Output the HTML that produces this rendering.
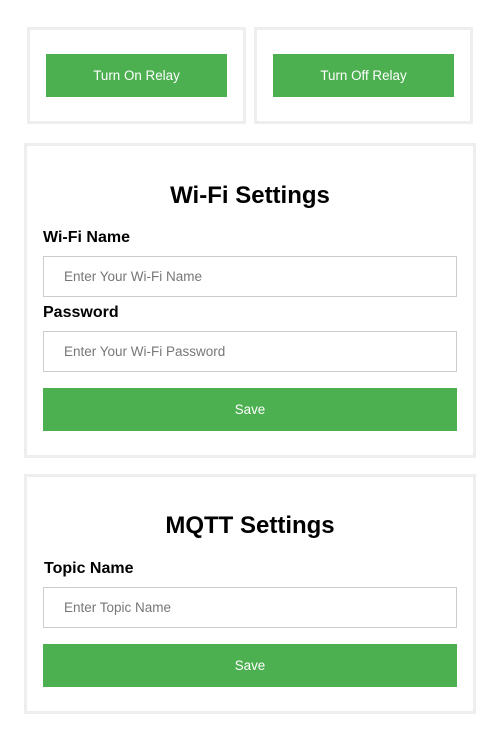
<!DOCTYPE html>
<html><head><style>
body{margin:0;width:500px;height:755px;background:#fff;font-family:"Liberation Sans",Arial,sans-serif;position:relative}
.box{position:absolute;border:3px solid #eee;box-sizing:border-box}
.btn{position:absolute;background:#4caf50;color:#fff;font-size:13.4px;display:flex;align-items:center;justify-content:center}
.h{position:absolute;left:0;right:0;text-align:center;font-weight:bold;font-size:24px;color:#000}
.lbl{position:absolute;font-weight:bold;font-size:16px;color:#000}
.in{position:absolute;left:43px;width:414px;height:41px;border:1px solid #ccc;box-sizing:border-box;color:#777;font-size:13.5px;padding-left:20px;line-height:39px}
</style></head><body>
<div class="box" style="left:27px;top:27px;width:219px;height:97px"></div>
<div class="box" style="left:254px;top:27px;width:219px;height:97px"></div>
<div class="btn" style="left:46px;top:54px;width:181px;height:43px">Turn On Relay</div>
<div class="btn" style="left:273px;top:54px;width:181px;height:43px">Turn Off Relay</div>

<div class="box" style="left:24px;top:143px;width:452px;height:315px"></div>
<div class="h" style="top:182px">Wi-Fi Settings</div>
<div class="lbl" style="left:43px;top:229px">Wi-Fi Name</div>
<div class="in" style="top:256px">Enter Your Wi-Fi Name</div>
<div class="lbl" style="left:43px;top:304px">Password</div>
<div class="in" style="top:331px">Enter Your Wi-Fi Password</div>
<div class="btn" style="left:43px;top:388px;width:414px;height:43px">Save</div>

<div class="box" style="left:24px;top:474px;width:452px;height:240px"></div>
<div class="h" style="top:512px">MQTT Settings</div>
<div class="lbl" style="left:44px;top:560px">Topic Name</div>
<div class="in" style="top:587px">Enter Topic Name</div>
<div class="btn" style="left:43px;top:644px;width:414px;height:43px">Save</div>
</body></html>
